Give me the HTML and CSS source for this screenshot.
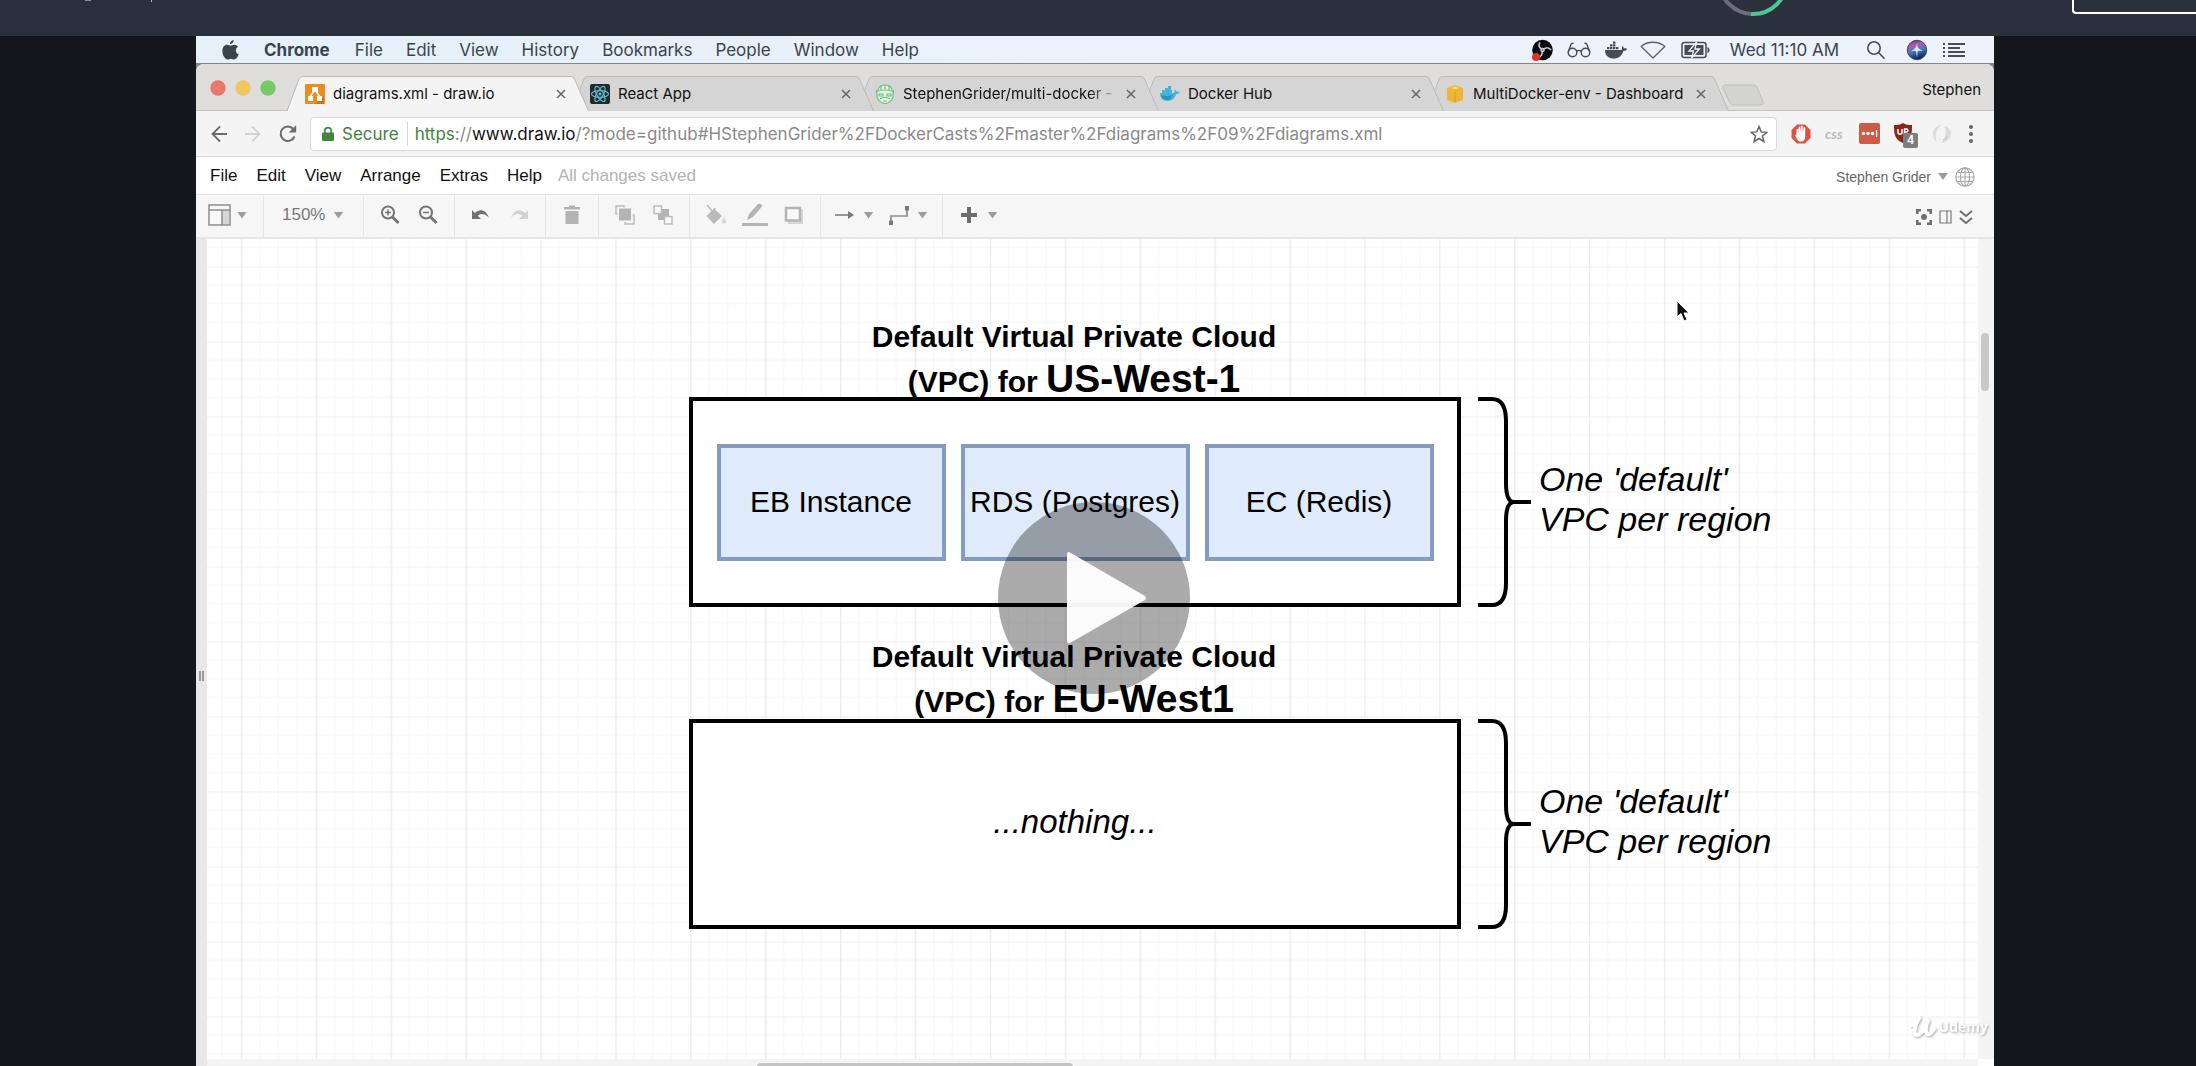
FILE: index.html
```html
<!DOCTYPE html>
<html lang="en">
<head>
<meta charset="utf-8">
<title>Lecture player</title>
<link rel="stylesheet" href="styles.css">
</head>
<body>
<header class="course-bar">
  <svg class="course-marks" width="80" height="3" viewBox="0 0 80 3"><path d="M0 0h6v1H0z" fill="#8a8d94"/><path d="M66 0h1v2h-1z" fill="#b0b3b8"/></svg>
  <svg class="progress-ring" width="72" height="17" viewBox="0 0 72 17" fill="none" stroke-width="4"><path d="M2-20A34 34 0 0 0 35 14" stroke="#6a6f7b"/><path d="M34 14A34 34 0 0 0 70-20" stroke="#4dc591"/></svg>
  <button class="course-button" aria-label="Share"></button>
</header>

<main class="stage">
  <nav class="mac-bar" aria-label="System menu">
    <svg class="apple" width="17" height="20" viewBox="0 0 17 20" fill="#3a444d"><path d="M11.600 0c.2 2-1.400 4.200-3.600 4.300C7.800 2.300 9.600.3 11.600 0zM8.700 5.700c.8 0 1.800-1 3.600-1 1.500 0 2.900.8 3.700 2-3.200 1.900-2.700 6.300.6 7.600-.8 2.400-2.500 5.200-4.400 5.200-1.200 0-1.800-.8-3.300-.8s-2.100.8-3.300.8C3 19.500.4 14.900.4 11 .4 7 2.700 4.800 5.100 4.800c1.600 0 2.700.9 3.600.9z"/></svg>
    <a href="#" class="app-name">Chrome</a><a href="#">File</a><a href="#">Edit</a><a href="#">View</a><a href="#">History</a><a href="#">Bookmarks</a><a href="#">People</a><a href="#">Window</a><a href="#">Help</a>
    <div class="mac-status">
      <svg width="26" height="22" viewBox="0 0 26 22"><circle cx="13.500" cy="11" r="10.300" fill="#0a0a0c"/><g fill="none" stroke="#c9ccd2" stroke-width="1.600"><path d="M13 10C10 9 9 6 11 3.500"/><path d="M14 11c2-3 6-3 8 0"/><path d="M13 12c1 3-1 6-4 6.500"/><circle cx="13.500" cy="11" r="1.500"/></g><circle cx="7" cy="18" r="4" fill="#e03127"/></svg>
      <svg width="26" height="20" viewBox="0 0 26 20" fill="none" stroke="#454e58" stroke-width="1.400"><circle cx="6.500" cy="12.500" r="4.300"/><circle cx="19.500" cy="12.500" r="4.300"/><path d="M10.800 11.500c1-1.500 3.400-1.500 4.400 0M2.200 12L5 4.500c.5-1 1.500-1.500 2.500-1M23.800 12L21 4.500c-.5-1-1.500-1.500-2.500-1"/></svg>
      <svg width="26" height="20" viewBox="0 0 26 20" fill="#454e58"><path d="M2 10h16.500c.8-1 .8-2.500.2-3.500 1-.6 1.900.5 2.200 1.800 1.200-.3 2.600 0 3.300.5-.6 1.500-2 2.200-3.800 2.200-1.600 5-5 7.600-9.600 7.600C5.500 18.600 2 15.500 2 10zM4 7h2.400v2.300H4zM7 7h2.400v2.300H7zM10 7h2.400v2.300H10zM13 7h2.400v2.300H13zM7 4.200h2.400v2.300H7zM10 4.200h2.400v2.300H10zM10 1.400h2.400v2.300H10z"/></svg>
      <svg width="26" height="20" viewBox="0 0 26 20" fill="none" stroke="#59626c" stroke-width="1.300" stroke-linejoin="round"><path d="M1.200 6.500C7.500.8 18.500.8 24.800 6.500L13 18z"/></svg>
      <svg class="battery" width="30" height="18" viewBox="0 0 30 18"><rect x="1" y="1.500" width="24" height="15" rx="2.500" fill="none" stroke="#454e58" stroke-width="1.500"/><path d="M26.500 6c1.400.5 2 1.500 2 3s-.6 2.500-2 3z" fill="#454e58"/><rect x="3.500" y="4" width="19" height="10" fill="#454e58"/><path d="M15.500 1L8 10h4.500L10.500 17 18.500 8H14z" fill="#454e58" stroke="#edf2fa" stroke-width="1.300"/></svg>
      <time>Wed 11:10 AM</time>
      <svg class="after-clock" width="20" height="20" viewBox="0 0 20 20" fill="none" stroke="#454e58" stroke-width="1.600"><circle cx="8" cy="8" r="6.200"/><path d="M12.500 12.500L18.500 18.800"/></svg>
      <svg class="siri" width="22" height="22" viewBox="0 0 22 22"><defs><linearGradient id="siri" x1="0" y1="0" x2=".3" y2="1"><stop offset="0" stop-color="#4a3f8f"/><stop offset=".35" stop-color="#b75aa8"/><stop offset=".65" stop-color="#3c76c4"/><stop offset="1" stop-color="#14284f"/></linearGradient></defs><circle cx="11" cy="11" r="9.700" fill="url(#siri)" stroke="#3a4460"/><path d="M11 3c0 5 .5 6 6 9-4-.5-5-.5-5.500 1L11 19l-.7-6c-.6-1.500-2-1.500-5.300-.5C10 9 10.800 8 11 3z" fill="#d4ecff"/></svg>
      <svg class="list-icon" width="24" height="16" viewBox="0 0 24 16" fill="#454e58"><path d="M1 1h2v2H1zM1 5h2v2H1zM1 9h2v2H1zM1 13h2v2H1zM6 1h17v2H6zM6 5h12v2H6zM6 9h17v2H6zM6 13h17v2H6z"/></svg>
    </div>
  </nav>

  <section class="browser">
    <div class="tab-strip">
      <svg class="lights" width="70" height="18" viewBox="0 0 70 18"><circle cx="8" cy="9" r="7.700" fill="#e8796c"/><circle cx="33" cy="9" r="7.700" fill="#f2c462"/><circle cx="58" cy="9" r="7.700" fill="#77cb66"/></svg>
      <div class="tabs">
        <div class="tab active">
          <svg class="tab-shape" width="302" height="35" viewBox="0 0 302 35"><path d="M0 35L12 3q1-2.500 3.500-2.500H284q2.500 0 3.500 2.500l14 32"/></svg>
          <svg class="favicon" width="20" height="20" viewBox="0 0 20 20"><rect width="20" height="20" rx="1" fill="#e98d22"/><path d="M10 20l9-8v8z" fill="#cf7417"/><g fill="#fff"><path d="M7 3h6v5H7zM3 12h5v5H3zM12 12h5v5h-5z"/><path d="M9 7L5 13M11 7l4 6" stroke="#fff" stroke-width="1.600"/></g></svg>
          <span class="tab-title">diagrams.xml - draw.io</span><button class="close" aria-label="Close tab"><svg width="10" height="10" viewBox="0 0 10 10"><path d="M1 1l8 8M9 1L1 9"/></svg></button>
        </div>
        <div class="tab">
          <svg class="tab-shape" width="302" height="35" viewBox="0 0 302 35"><path d="M0 35L12 3q1-2.500 3.500-2.500H284q2.500 0 3.500 2.500l14 32"/></svg>
          <svg class="favicon" width="20" height="20" viewBox="0 0 20 20"><rect width="20" height="20" rx="2" fill="#222a2e"/><g fill="none" stroke="#5fb6cc" stroke-width="1.200"><ellipse cx="10" cy="10" rx="8.500" ry="3.300"/><ellipse cx="10" cy="10" rx="8.500" ry="3.300" transform="rotate(60 10 10)"/><ellipse cx="10" cy="10" rx="8.500" ry="3.300" transform="rotate(120 10 10)"/></g><circle cx="10" cy="10" r="1.600" fill="#5fb6cc"/></svg>
          <span class="tab-title">React App</span><button class="close" aria-label="Close tab"><svg width="10" height="10" viewBox="0 0 10 10"><path d="M1 1l8 8M9 1L1 9"/></svg></button>
        </div>
        <div class="tab">
          <svg class="tab-shape" width="302" height="35" viewBox="0 0 302 35"><path d="M0 35L12 3q1-2.500 3.500-2.500H284q2.500 0 3.500 2.500l14 32"/></svg>
          <svg class="favicon" width="20" height="20" viewBox="0 0 20 20"><path d="M3 6C4 2 7 1 10 1s6 1 7 5c2 .5 2 2 1 3v4c-1 3-4 6.500-8 6.500S3 16 2 13V9C1 8 1 6.500 3 6z" fill="#e3f4e6" stroke="#6fbf80" stroke-width="1.200"/><path d="M2 7.500q8-3 16 0M10 1v5M6 2v4M14 2v4M4 10h4v2H4zM12 10h4v2h-4zM5 15q5-3.500 10 0M8 17h4" fill="none" stroke="#6fbf80" stroke-width="1.200"/></svg>
          <span class="tab-title fade">StephenGrider/multi-docker - T</span><button class="close" aria-label="Close tab"><svg width="10" height="10" viewBox="0 0 10 10"><path d="M1 1l8 8M9 1L1 9"/></svg></button>
        </div>
        <div class="tab">
          <svg class="tab-shape" width="302" height="35" viewBox="0 0 302 35"><path d="M0 35L12 3q1-2.500 3.500-2.500H284q2.500 0 3.500 2.500l14 32"/></svg>
          <svg class="favicon" width="20" height="20" viewBox="0 0 20 20"><path d="M0 9h14c1-1 .8-2.500.3-3.500 1.200-.2 2 .9 2.200 2 1.300-.3 2.700 0 3.300.6-.6 1.500-2 2-3.500 2-1.600 4.500-4.500 6.900-8.600 6.900C3 17 0 14 0 9zM2 6h10v3H2zM5 4h6v3H5zM8 2h3v3H8z" fill="#45b4dd"/><path d="M1 11q6 2 12 0-2 5-6 5-5 0-6-5z" fill="#2d94bd"/></svg>
          <span class="tab-title">Docker Hub</span><button class="close" aria-label="Close tab"><svg width="10" height="10" viewBox="0 0 10 10"><path d="M1 1l8 8M9 1L1 9"/></svg></button>
        </div>
        <div class="tab">
          <svg class="tab-shape" width="302" height="35" viewBox="0 0 302 35"><path d="M0 35L12 3q1-2.500 3.500-2.500H284q2.500 0 3.500 2.500l14 32"/></svg>
          <svg class="favicon" width="20" height="20" viewBox="0 0 20 20"><path d="M2 4l8-3 8 3v12l-8 3-8-3z" fill="#f0b537"/><path d="M6.500 4L10 2.800 13.500 4 10 5.300z" fill="#fbe3a6"/><path d="M10 7v11.500" stroke="#d99b1e"/></svg>
          <span class="tab-title">MultiDocker-env - Dashboard</span><button class="close" aria-label="Close tab"><svg width="10" height="10" viewBox="0 0 10 10"><path d="M1 1l8 8M9 1L1 9"/></svg></button>
        </div>
      </div>
      <button class="new-tab" aria-label="New tab"><svg width="42" height="22" viewBox="0 0 42 22"><path d="M3 1h29q2 0 3 2l6 15q.8 3-2 3H11q-2 0-3-2L1 4Q.5 1 3 1z" fill="#d3d3d2" stroke="#bdbdbc"/></svg></button>
      <span class="profile">Stephen</span>
    </div>

    <div class="nav-bar">
      <button aria-label="Back"><svg width="16" height="18" viewBox="0 0 16 18" fill="none" stroke="#6b6b6b" stroke-width="1.800"><path d="M16 9H1.500M9 1.500L1.500 9 9 16.500"/></svg></button>
      <button aria-label="Forward"><svg width="16" height="18" viewBox="0 0 16 18" fill="none" stroke="#d2d2d2" stroke-width="1.800"><path d="M0 9h14.500M7 1.500L14.500 9 7 16.500"/></svg></button>
      <button aria-label="Reload"><svg width="18" height="18" viewBox="0 0 18 18"><path d="M15.500 11.500A7.200 7.200 0 1 1 14.500 4.300" fill="none" stroke="#6b6b6b" stroke-width="2"/><path d="M17.200 0v7.500h-7.500z" fill="#6b6b6b"/></svg></button>
      <div class="address">
        <svg width="12" height="14" viewBox="0 0 12 14"><rect y="5.500" width="12" height="8.500" rx="1" fill="#43833f"/><path d="M2.800 6V3.800a3.200 3.200 0 0 1 6.400 0V6" fill="none" stroke="#43833f" stroke-width="1.700"/></svg>
        <span class="secure">Secure</span>
        <div class="url" role="textbox" aria-label="Address" contenteditable="true" spellcheck="false"><span class="scheme">https</span>://<span class="host">www.draw.io</span>/?mode=github#HStephenGrider%2FDockerCasts%2Fmaster%2Fdiagrams%2F09%2Fdiagrams.xml</div>
        <button class="star" aria-label="Bookmark"><svg width="18" height="18" viewBox="0 0 18 18" fill="none" stroke="#666" stroke-width="1.500"><path d="M9 1.500l2.200 5.400 5.600.4-4.300 3.700 1.400 5.600L9 13.500l-4.900 3.100 1.400-5.600L1.200 7.300l5.600-.4z"/></svg></button>
      </div>
      <div class="extensions">
        <svg width="20" height="20" viewBox="0 0 20 20"><path d="M6 .5h8L19.500 6v8L14 19.500H6L.5 14V6z" fill="#dd5346"/><path d="M5.500 10V5.500q.9-1 1.700 0V9l.4-6q.9-1 1.700 0l.3 5.500.4-6.500q1-1 1.700 0l.2 7 .7-5.500q1-.9 1.600 0V13q-.5 4.500-4 4.500c-3 0-4-2-6-6 .3-1 1-.8 1.300-1.500z" fill="#fff"/></svg>
        <span class="css-ext">css</span>
        <svg width="21" height="21" viewBox="0 0 21 21"><rect width="21" height="21" rx="2" fill="#d05a48"/><g fill="#fff"><circle cx="4.500" cy="10.500" r="1.700"/><circle cx="9" cy="10.500" r="1.700"/><circle cx="13.500" cy="10.500" r="1.700"/><path d="M17 7h1.200v7H17z"/></g></svg>
        <span class="shield"><svg width="24" height="25" viewBox="0 0 24 25"><path d="M9 0c3 2 6 2 9 2 0 8 0 14-9 18C0 16 0 10 0 2c3 0 6 0 9-2z" fill="#86281c"/><path d="M4 6v4q2 2.500 4 0V6M10.500 12V6h2.500q2 1.500 0 3h-2" fill="none" stroke="#fff" stroke-width="1.500"/></svg><b>4</b></span>
        <svg width="20" height="20" viewBox="0 0 20 20" fill="#dcdcdc"><path d="M9 1C3 2 0 7 1 12c.5 3 2.500 5 4 6-2-6-1-12 4-17zM12 2c3 5 2 12-3 17 6-.5 10-5 10-10 0-3-2-6-7-7z"/><path d="M6 14q5 4 9-2-1 7-9 2z" fill="#c9c9c9"/></svg>
        <button aria-label="Browser menu"><svg width="4" height="18" viewBox="0 0 4 18" fill="#666"><circle cx="2" cy="2" r="2"/><circle cx="2" cy="9" r="2"/><circle cx="2" cy="16" r="2"/></svg></button>
      </div>
    </div>

    <nav class="app-menu" aria-label="Diagram menu">
      <a href="#">File</a><a href="#">Edit</a><a href="#">View</a><a href="#">Arrange</a><a href="#">Extras</a><a href="#">Help</a><span class="saved">All changes saved</span>
      <button class="account">Stephen Grider<i class="caret"></i></button>
      <button aria-label="Language"><svg width="20" height="20" viewBox="0 0 20 20" fill="none" stroke="#aaa" stroke-width="1.200"><circle cx="10" cy="10" r="9.200"/><ellipse cx="10" cy="10" rx="4.500" ry="9.200"/><path d="M10 1v18M1 10h18M2.500 5.500h15M2.500 14.500h15"/></svg></button>
    </nav>

    <div class="tools" role="toolbar" aria-label="Diagram tools">
      <div class="group first"><button class="drop" aria-label="View"><svg width="24" height="24" viewBox="0 0 24 24"><rect x="2" y="2" width="21" height="20" fill="#f8f8f8" stroke="#8d8d8d" stroke-width="1.500"/><path d="M15 7.500h7V21h-7z" fill="#d6d6d6"/><path d="M2 7h21M15 7v15" stroke="#8d8d8d" stroke-width="1.500"/></svg><i class="caret"></i></button></div>
      <div class="group zoom-group"><button class="drop zoom-level">150%<i class="caret"></i></button></div>
      <div class="group">
        <button aria-label="Zoom in"><svg width="24" height="24" viewBox="0 0 24 24" fill="none" stroke="#747474"><circle cx="10" cy="9.500" r="6" stroke-width="2"/><path d="M14.500 14l6 6" stroke-width="3"/><path d="M7 9.500h6M10 6.500v6" stroke-width="1.500"/></svg></button>
        <button aria-label="Zoom out"><svg width="24" height="24" viewBox="0 0 24 24" fill="none" stroke="#747474"><circle cx="10" cy="9.500" r="6" stroke-width="2"/><path d="M14.500 14l6 6" stroke-width="3"/><path d="M7 9.500h6" stroke-width="1.500"/></svg></button>
      </div>
      <div class="group">
        <button aria-label="Undo"><svg width="24" height="24" viewBox="0 0 24 24"><path d="M3 7v9h9l-3.200-3.200c3.500-3 8-1.800 11.200 2.200C17 6 10 5.500 6 10z" fill="#707070"/></svg></button>
        <button aria-label="Redo"><svg width="24" height="24" viewBox="0 0 24 24"><path d="M21 7v9h-9l3.200-3.200c-3.500-3-8-1.800-11.200 2.200C7 6 14 5.500 18 10z" fill="#d3d3d3"/></svg></button>
      </div>
      <div class="group"><button aria-label="Delete"><svg width="24" height="24" viewBox="0 0 24 24" fill="#b4b4b4"><path d="M4 4h5V2.500h6V4h5v2.500H4zM5.500 8h13v13h-13z"/></svg></button></div>
      <div class="group">
        <button aria-label="To front"><svg width="24" height="24" viewBox="0 0 24 24"><path d="M6 5.500h12v12H6z" fill="#b4b4b4"/><path d="M4.500 11H3V3h8v1.500M19.500 12H21v9h-9v-2" fill="none" stroke="#bcbcbc" stroke-width="1.500"/></svg></button>
        <button aria-label="To back"><svg width="24" height="24" viewBox="0 0 24 24"><path d="M7 6h11v11H7z" fill="#b4b4b4"/><path d="M3 3h7.500v7.500H3zM13.500 13.500H21V21h-7.500z" fill="#f8f8f8" stroke="#bcbcbc" stroke-width="1.500"/></svg></button>
      </div>
      <div class="group">
        <button aria-label="Fill color"><svg width="24" height="24" viewBox="0 0 24 24" fill="#bababa"><path d="M10.500 6l7.500 7-8 8-7.500-8z"/><path d="M3 2l8 9M4.500 12l7-7" stroke="#bababa" stroke-width="1.500"/><path d="M20 14q4 6 0 6.500-4-.5 0-6.500z" fill="#d6d6d6"/></svg></button>
        <button aria-label="Line color"><svg width="26" height="24" viewBox="0 0 26 24" fill="#b4b4b4"><path d="M5 17l2-6 9-10q3-1 4.500 2L11 14z"/><path d="M0 20h26v3H0z"/></svg></button>
        <button aria-label="Shadow"><svg width="24" height="24" viewBox="0 0 24 24"><path d="M6 6h15v15H6z" fill="#d6d6d6"/><path d="M4 5h14v12.500H4z" fill="#f8f8f8" stroke="#b4b4b4" stroke-width="2.500"/></svg></button>
      </div>
      <div class="group menus">
        <button class="drop" aria-label="Connection"><svg width="24" height="24" viewBox="0 0 24 24" fill="#787878"><path d="M2 11.200h14v1.600H2zM15 8l6 4-6 4z"/></svg><i class="caret"></i></button>
        <button class="drop" aria-label="Waypoints"><svg width="24" height="24" viewBox="0 0 24 24"><path d="M4 20v-7h16V6" fill="none" stroke="#8c8c8c" stroke-width="1.700"/><path d="M2 17.500h4v4.500H2zM18 3h4v4.500h-4z" fill="#787878"/></svg><i class="caret"></i></button>
      </div>
      <div class="group last"><button class="drop" aria-label="Insert"><svg width="24" height="24" viewBox="0 0 24 24"><path d="M12 4v16M4 12h16" stroke="#6c6c6c" stroke-width="4"/></svg><i class="caret"></i></button></div>
      <div class="tools-right">
        <button aria-label="Fullscreen"><svg width="16" height="16" viewBox="0 0 16 16" fill="#6f6f6f"><path d="M0 0h5v2.500H2.500V5H0zM11 0h5v5h-2.500V2.500H11zM0 11h2.500v2.500H5V16H0zM13.500 11H16v5h-5v-2.500h2.500z"/><circle cx="8" cy="8" r="3"/></svg></button>
        <button aria-label="Format panel"><svg width="13" height="14" viewBox="0 0 13 14" fill="none" stroke="#777" stroke-width="1.200"><path d="M1 1h11v12H1zM8 1v12"/></svg></button>
        <button aria-label="Collapse"><svg width="14" height="15" viewBox="0 0 14 15" fill="none" stroke="#6f6f6f" stroke-width="1.900"><path d="M1 1l6 5 6-5M1 8l6 5 6-5"/></svg></button>
      </div>
    </div>

    <div class="workspace">
      <div class="gutter"><i class="grip"></i></div>
      <div class="canvas">
        <svg class="grid" width="100%" height="100%"><defs><pattern id="grid" x="33.800" y="27.300" width="74.900" height="75" patternUnits="userSpaceOnUse"><path d="M18.700 0v75M37.400 0v75M56.200 0v75M0 18.700h75M0 37.500h75M0 56.200h75" stroke="#f9f9f9" stroke-width="1.500" fill="none"/><path d="M0 .7h75" stroke="#f3f3f3" stroke-width="1.500"/><path d="M.7 0v75" stroke="#ebebeb" stroke-width="1.300"/></pattern></defs><rect width="100%" height="100%" fill="url(#grid)"/></svg>

        <h2 class="node title us-title">Default Virtual Private Cloud (VPC) for <span>US-West-1</span></h2>
        <div class="node vpc us">
          <div class="service">EB Instance</div><div class="service">RDS (Postgres)</div><div class="service">EC (Redis)</div>
        </div>
        <svg class="node brace us-brace" width="54" height="210" viewBox="0 0 54 210"><path d="M0 2h14q14 0 14 22v62q0 19 8 19h17h-17q-8 0-8 19v62q0 22-14 22H0"/></svg>
        <p class="node note us-note">One 'default'<br>VPC per region</p>

        <h2 class="node title eu-title">Default Virtual Private Cloud (VPC) for <span>EU-West1</span></h2>
        <div class="node vpc eu"><em>...nothing...</em></div>
        <svg class="node brace eu-brace" width="54" height="210" viewBox="0 0 54 210"><path d="M0 2h14q14 0 14 22v62q0 19 8 19h17h-17q-8 0-8 19v62q0 22-14 22H0"/></svg>
        <p class="node note eu-note">One 'default'<br>VPC per region</p>

        <svg class="node cursor" width="16" height="24" viewBox="0 0 16 24"><path d="M1 1v16l4-3.500L8 21l3-1.500-3-6.500h5z" fill="#111" stroke="#fff" stroke-width="1"/></svg>
      </div>
      <div class="v-scroll"><i class="v-thumb"></i></div>
      <div class="h-scroll"><i class="h-thumb"></i></div>
      <div class="corner"></div>
    </div>
  </section>

  <button class="play" aria-label="Play"><svg width="192" height="192" viewBox="0 0 192 192"><circle cx="96" cy="96" r="96" fill="#000" fill-opacity=".33"/><path d="M69 52q0-3 3-1.500L147 94q2 2 0 4L72 141q-3 1-3-2z" fill="#fff" fill-opacity=".95"/></svg></button>
  <div class="watermark"><svg width="26" height="22" viewBox="0 0 26 22" fill="none" stroke="#fff" stroke-linecap="round"><path d="M1 10q5-1 8-8" stroke-width="2.500"/><path d="M9 2C4 11 3 19 7 19S15 12 18 5M18 5c-4 9-2 14 1 13s3-3 5-5" stroke-width="4"/></svg>Udemy</div>
</main>
</body>
</html>
```
FILE: styles.css
```css
* { box-sizing: border-box; }
body {
  margin: 0;
  height: 100vh;
  overflow: hidden;
  display: flex;
  flex-direction: column;
  background: #14171c;
  font-family: Inter, "Liberation Sans", sans-serif;
}
button { border: 0; padding: 0; background: none; font: inherit; color: inherit; display: flex; align-items: center; }
a { color: inherit; text-decoration: none; }
svg { display: block; flex: none; }

.course-bar { flex: none; height: 36px; display: flex; align-items: flex-start; padding-left: 85px; background: #2a303c; }
.progress-ring { margin-left: auto; margin-right: 283px; }
.course-button { width: 124px; height: 14px; border: solid #fff; border-width: 0 0 2px 2px; border-radius: 0 0 0 4px; }

.stage { position: relative; flex: 1; min-height: 0; margin: 0 202px 0 196px; display: flex; flex-direction: column; background: #7d8890; }

.mac-bar { flex: none; height: 27px; display: flex; align-items: center; gap: 23px; padding: 1px 28px 0 26px; background: linear-gradient(90deg, #e5f0f9, #eef2fb); color: #3a444d; font-size: 17px; line-height: 26px; }
.apple { margin-right: 2px; }
.app-name { font-weight: 700; margin-right: 2px; }
.mac-status { margin-left: auto; display: flex; align-items: center; gap: 11px; }
.battery { margin-left: 4px; }
.mac-status time { margin-left: 8px; }
.after-clock { margin-left: 16px; }
.siri { margin-left: 9px; }
.list-icon { margin-left: 3px; }

.browser { flex: 1; min-height: 0; margin-top: 1px; display: flex; flex-direction: column; border-radius: 8px 8px 0 0; overflow: hidden; background: #fff; }

.tab-strip { flex: none; height: 47px; display: flex; align-items: flex-end; padding: 0 13px 0 14px; background: #dfdedc; border-bottom: 1px solid #c2c2c2; font-size: 15px; color: #111; }
.lights { margin-bottom: 13px; margin-right: 7px; }
.tabs { display: flex; margin-bottom: -1px; }
.tab { position: relative; width: 285px; height: 35px; display: flex; align-items: center; padding-left: 18px; }
.tab:nth-child(1) { z-index: 5; }
.tab:nth-child(2) { z-index: 4; }
.tab:nth-child(3) { z-index: 3; }
.tab:nth-child(4) { z-index: 2; }
.tab:nth-child(5) { z-index: 1; }
.tab-shape { position: absolute; left: 0; top: 0; fill: #d5d5d5; stroke: #bababa; }
.active .tab-shape { fill: #f4f4f4; }
.favicon, .tab-title, .close { position: relative; }
.tab-title { width: 218px; margin-left: 8px; white-space: nowrap; overflow: hidden; line-height: 20px; }
.fade { -webkit-mask-image: linear-gradient(90deg, #000 185px, transparent 216px); mask-image: linear-gradient(90deg, #000 185px, transparent 216px); }
.close { margin-left: 5px; }
.close path { stroke: #666; stroke-width: 1.500; }
.new-tab { margin: 0 0 4px 10px; }
.profile { margin-left: auto; margin-bottom: 10px; line-height: 20px; }

.nav-bar { flex: none; height: 46px; display: flex; align-items: center; gap: 18px; padding: 0 21px 0 15px; background: #f4f4f4; border-bottom: 1px solid #d9d9d9; }
.address { flex: 1; min-width: 0; height: 34px; margin-left: -5px; display: flex; align-items: center; padding: 0 8px 0 11px; background: #fff; border: 1px solid #d8d8d8; border-radius: 4px; font-size: 17px; line-height: 24px; color: #8a8a8a; }
.secure { margin-left: 8px; padding-right: 8px; color: #43833f; border-right: 1px solid #d8d8d8; }
.url { flex: 1; min-width: 0; margin-left: 7px; white-space: nowrap; overflow: hidden; }
.scheme { color: #43833f; }
.host { color: #111; }
.extensions { display: flex; align-items: center; gap: 14px; margin-left: -4px; }
.css-ext { width: 20px; font: italic 700 14px/20px Lato, sans-serif; color: #bbb; }
.shield { position: relative; width: 24px; height: 21px; }
.shield b { position: absolute; left: 9px; top: 10px; width: 15px; height: 15px; background: #7d7d7d; border-radius: 2px; color: #fff; font: 700 12px/15px "Liberation Sans", sans-serif; text-align: center; }
.extensions button { margin-left: 3px; }

.app-menu { flex: none; height: 38px; display: flex; align-items: center; gap: 19px; padding: 0 19px 0 14px; border-bottom: 1px solid #e3e3e3; font: 17px/20px "Liberation Sans", Arial, sans-serif; color: #111; }
.saved { margin-left: -3px; color: #b3b3b3; }
.account { margin-left: auto; gap: 7px; font-size: 14px; color: #666; }
.app-menu button { margin-top: 2px; }
.account + button { margin-left: -12px; }
.caret { width: 10px; height: 7px; background: #9c9c9c; clip-path: polygon(0 0, 100% 0, 50% 100%); }

.tools { flex: none; height: 44px; display: flex; padding-right: 21px; background: #f6f6f6; border-bottom: 2px solid #e6e6e6; }
.group { display: flex; align-items: center; gap: 14px; height: 42px; padding: 0 14px 2px; border-right: 1px solid #e6e6e6; }
.first { padding-left: 11px; padding-right: 16px; }
.zoom-group { padding-left: 18px; padding-right: 20px; }
.menus { padding-left: 12px; padding-right: 15px; }
.last { border-right: 0; }
.group button { min-width: 24px; justify-content: center; }
.drop { gap: 6px; }
.zoom-level { gap: 8px; font: 17px/20px "Liberation Sans", Arial, sans-serif; color: #777; }
.tools-right { margin-left: auto; display: flex; align-items: center; gap: 7px; padding-top: 2px; }

.workspace { flex: 1; min-height: 0; display: grid; grid-template-columns: 11px 1fr 16px; grid-template-rows: 1fr 7px; }
.gutter { grid-row: 1 / 3; display: flex; align-items: center; justify-content: center; background: #e8e8e8; padding-top: 46px; }
.grip { width: 5px; height: 10px; border: solid #9a9a9a; border-width: 0 2px; }
.canvas { position: relative; overflow: hidden; background: #fff; }
.grid { position: absolute; inset: 0; }
.v-scroll { background: #f4f4f4; padding: 94px 0 0 3px; }
.v-thumb { display: block; width: 8px; height: 58px; border-radius: 4px; background: #c8c8c8; }
.h-scroll { background: #f4f4f4; padding: 4px 0 0 550px; }
.h-thumb { display: block; width: 316px; height: 8px; border-radius: 4px; background: #c4c4c4; }
.corner { background: #fff; }

.node { position: absolute; margin: 0; font-family: "Liberation Sans", Arial, sans-serif; color: #000; }
.title { left: 642px; width: 450px; text-align: center; font-size: 30px; line-height: 42px; font-weight: 700; }
.title span { font-size: 39px; }
.us-title { top: 77px; }
.eu-title { top: 397px; }
.vpc { left: 482px; width: 772px; height: 210px; display: flex; align-items: center; justify-content: center; gap: 15px; border: 4px solid #000; background: #fff; font-size: 33px; }
.us { top: 158px; }
.eu { top: 480px; }
.service { width: 229px; height: 117px; display: flex; align-items: center; justify-content: center; background: #dfebfa; border: 4px solid #849bc3; font-size: 30px; white-space: nowrap; }
.vpc em { padding-bottom: 4px; }
.brace { left: 1271px; fill: none; stroke: #000; stroke-width: 4px; }
.us-brace { top: 158px; }
.eu-brace { top: 480px; }
.note { left: 1332px; font-size: 34px; line-height: 40px; font-style: italic; white-space: nowrap; }
.us-note { top: 220px; }
.eu-note { top: 542px; }
.cursor { left: 1469px; top: 61px; }

.play { position: absolute; left: calc(50% - 97px); top: 466px; }
.watermark { position: absolute; right: 6px; bottom: 28px; display: flex; align-items: center; gap: 3px; color: #fff; font: 700 14px/22px "Open Sans", sans-serif; filter: drop-shadow(1px 1px 1px #aaa); }
```
